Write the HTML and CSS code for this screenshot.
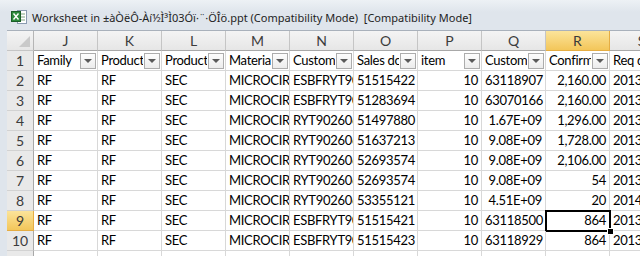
FILE: index.html
```html
<!DOCTYPE html>
<html lang="en">
<head>
    <meta charset="UTF-8">
    <title>Worksheet</title>
    <link rel="stylesheet" href="styles.css">
</head>
<body>
    <div class="window">
        <div class="titlebar">
            <svg class="app-icon" width="17" height="16" viewBox="0 0 17 16">
                <rect x="6.5" y="1.5" width="9" height="13" fill="#fff" stroke="#8a9bb0"/>
                <path d="M9 5h5M9 8h5M9 11h5" stroke="#7fa37f"/>
                <rect x="0.5" y="2.5" width="9" height="10" fill="#2c8a3c" stroke="#1b5e28"/>
                <path d="M2.5 4.5l5 6M7.5 4.5l-5 6" stroke="#fff" stroke-width="1.4"/>
            </svg>
            <span class="title">Worksheet in ±àÒëÔ-Àí½Ì³Ì03Óï·¨·ÖÎö.ppt (Compatibility Mode)&nbsp; [Compatibility Mode]</span>
        </div>

        <div class="sheet">
            <div class="row colheads">
                <div class="corner"></div>
                <div class="colhead">J</div>
                <div class="colhead">K</div>
                <div class="colhead">L</div>
                <div class="colhead">M</div>
                <div class="colhead">N</div>
                <div class="colhead">O</div>
                <div class="colhead">P</div>
                <div class="colhead">Q</div>
                <div class="colhead active">R</div>
                <div class="colhead">S</div>
            </div>

            <div class="row">
                <div class="rowhead">1</div>
                <div class="cell filter"><span>Family</span><i class="dd"></i></div>
                <div class="cell filter"><span>Product</span><i class="dd"></i></div>
                <div class="cell filter"><span>Product</span><i class="dd"></i></div>
                <div class="cell filter"><span>Material</span><i class="dd"></i></div>
                <div class="cell filter"><span>Customer</span><i class="dd"></i></div>
                <div class="cell filter"><span>Sales doc</span><i class="dd"></i></div>
                <div class="cell filter"><span>item</span><i class="dd"></i></div>
                <div class="cell filter"><span>Customer</span><i class="dd"></i></div>
                <div class="cell filter"><span>Confirmed</span><i class="dd"></i></div>
                <div class="cell filter"><span>Req date</span><i class="dd"></i></div>
            </div>

            <div class="row">
                <div class="rowhead">2</div>
                <div class="cell">RF</div>
                <div class="cell">RF</div>
                <div class="cell">SEC</div>
                <div class="cell">MICROCIRCUIT</div>
                <div class="cell">ESBFRYT9010</div>
                <div class="cell num">51515422</div>
                <div class="cell num">10</div>
                <div class="cell num">63118907</div>
                <div class="cell num">2,160.00</div>
                <div class="cell">2013</div>
            </div>

            <div class="row">
                <div class="rowhead">3</div>
                <div class="cell">RF</div>
                <div class="cell">RF</div>
                <div class="cell">SEC</div>
                <div class="cell">MICROCIRCUIT</div>
                <div class="cell">ESBFRYT9010</div>
                <div class="cell num">51283694</div>
                <div class="cell num">10</div>
                <div class="cell num">63070166</div>
                <div class="cell num">2,160.00</div>
                <div class="cell">2013</div>
            </div>

            <div class="row">
                <div class="rowhead">4</div>
                <div class="cell">RF</div>
                <div class="cell">RF</div>
                <div class="cell">SEC</div>
                <div class="cell">MICROCIRCUIT</div>
                <div class="cell">RYT9026060</div>
                <div class="cell num">51497880</div>
                <div class="cell num">10</div>
                <div class="cell num">1.67E+09</div>
                <div class="cell num">1,296.00</div>
                <div class="cell">2013</div>
            </div>

            <div class="row">
                <div class="rowhead">5</div>
                <div class="cell">RF</div>
                <div class="cell">RF</div>
                <div class="cell">SEC</div>
                <div class="cell">MICROCIRCUIT</div>
                <div class="cell">RYT9026060</div>
                <div class="cell num">51637213</div>
                <div class="cell num">10</div>
                <div class="cell num">9.08E+09</div>
                <div class="cell num">1,728.00</div>
                <div class="cell">2013</div>
            </div>

            <div class="row">
                <div class="rowhead">6</div>
                <div class="cell">RF</div>
                <div class="cell">RF</div>
                <div class="cell">SEC</div>
                <div class="cell">MICROCIRCUIT</div>
                <div class="cell">RYT9026060</div>
                <div class="cell num">52693574</div>
                <div class="cell num">10</div>
                <div class="cell num">9.08E+09</div>
                <div class="cell num">2,106.00</div>
                <div class="cell">2013</div>
            </div>

            <div class="row">
                <div class="rowhead">7</div>
                <div class="cell">RF</div>
                <div class="cell">RF</div>
                <div class="cell">SEC</div>
                <div class="cell">MICROCIRCUIT</div>
                <div class="cell">RYT9026060</div>
                <div class="cell num">52693574</div>
                <div class="cell num">10</div>
                <div class="cell num">9.08E+09</div>
                <div class="cell num">54</div>
                <div class="cell">2013</div>
            </div>

            <div class="row">
                <div class="rowhead">8</div>
                <div class="cell">RF</div>
                <div class="cell">RF</div>
                <div class="cell">SEC</div>
                <div class="cell">MICROCIRCUIT</div>
                <div class="cell">RYT9026060</div>
                <div class="cell num">53355121</div>
                <div class="cell num">10</div>
                <div class="cell num">4.51E+09</div>
                <div class="cell num">20</div>
                <div class="cell">2014</div>
            </div>

            <div class="row">
                <div class="rowhead active">9</div>
                <div class="cell">RF</div>
                <div class="cell">RF</div>
                <div class="cell">SEC</div>
                <div class="cell">MICROCIRCUIT</div>
                <div class="cell">ESBFRYT9010</div>
                <div class="cell num">51515421</div>
                <div class="cell num">10</div>
                <div class="cell num">63118500</div>
                <div class="cell num selected">864<b class="handle"></b></div>
                <div class="cell">2013</div>
            </div>

            <div class="row">
                <div class="rowhead">10</div>
                <div class="cell">RF</div>
                <div class="cell">RF</div>
                <div class="cell">SEC</div>
                <div class="cell">MICROCIRCUIT</div>
                <div class="cell">ESBFRYT9010</div>
                <div class="cell num">51515423</div>
                <div class="cell num">10</div>
                <div class="cell num">63118929</div>
                <div class="cell num">864</div>
                <div class="cell">2013</div>
            </div>

            <div class="row">
                <div class="rowhead">11</div>
                <div class="cell"></div>
                <div class="cell"></div>
                <div class="cell"></div>
                <div class="cell"></div>
                <div class="cell"></div>
                <div class="cell"></div>
                <div class="cell"></div>
                <div class="cell"></div>
                <div class="cell"></div>
                <div class="cell"></div>
            </div>
        </div>
    </div>
</body>
</html>
```

FILE: styles.css
```css
* {
    box-sizing: border-box;
    margin: 0;
    padding: 0;
}

body {
    width: 640px;
    height: 256px;
    overflow: hidden;
    background-color: #dfe5ec;
}

.window {
    width: 640px;
    height: 256px;
    overflow: hidden;
}

.titlebar {
    height: 30px;
    display: flex;
    align-items: center;
    gap: 4px;
    padding: 4px 0 0 11px;
    background: linear-gradient(#edf1f5, #dfe5ec 40%);
}

.app-icon {
    flex-shrink: 0;
}

.title {
    font-family: "Noto Sans", sans-serif;
    font-size: 11px;
    color: #1e1e1e;
    white-space: nowrap;
}

.sheet {
    margin-left: 7px;
    border-top: 1px solid #a9b1bb;
    background-color: #fff;
    font-family: Lato, sans-serif;
    font-size: 13px;
    color: #000;
}

.row {
    display: grid;
    grid-template-columns: 27px repeat(10, 64px);
    height: 20px;
}

.corner,
.colhead,
.rowhead {
    background: linear-gradient(#f4f4f4, #e6e6e6);
    border-right: 1px solid #c5c5c5;
    border-bottom: 1px solid #c5c5c5;
    color: #3c3c3c;
    display: flex;
    align-items: center;
    justify-content: center;
    font-size: 14px;
}

.corner {
    position: relative;
    border-right-color: #b5b5b5;
}

.corner::after {
    content: '';
    position: absolute;
    right: 3px;
    bottom: 3px;
    border-left: 11px solid transparent;
    border-bottom: 11px solid #c9c9c9;
}

.rowhead {
    background: #e9e9e9;
    border-right-color: #a8a8a8;
    border-bottom-color: #d2d2d2;
}

.colhead {
    border-bottom-color: #a8a8a8;
}

.colhead.active,
.rowhead.active {
    background: linear-gradient(#fbe49a, #f3c65a);
    border-color: #e5ad43;
    color: #3a3a3a;
}

.cell {
    border-right: 1px solid #d8d8d8;
    border-bottom: 1px solid #d8d8d8;
    padding: 0 3px;
    line-height: 19px;
    letter-spacing: -0.3px;
    white-space: nowrap;
    overflow: hidden;
    position: relative;
}

.cell.num {
    text-align: right;
    overflow: visible;
}

.cell.filter {
    display: flex;
    align-items: center;
    gap: 1px;
    padding-right: 1px;
}

.cell.filter span {
    flex: 1;
    overflow: hidden;
}

.dd {
    flex-shrink: 0;
    width: 16px;
    height: 16px;
    border: 1px solid #acacac;
    background: linear-gradient(#fdfdfd, #ececec);
    display: flex;
    align-items: center;
    justify-content: center;
}

.dd::after {
    content: '';
    border-left: 4px solid transparent;
    border-right: 4px solid transparent;
    border-top: 4px solid #5a5a5a;
}

.cell.selected::before {
    content: '';
    position: absolute;
    left: -1px;
    top: -1px;
    right: -2px;
    bottom: -2px;
    border: 2px solid #000;
}

.handle {
    position: absolute;
    right: -5px;
    bottom: -5px;
    width: 7px;
    height: 7px;
    background-color: #000;
    border: 1px solid #fff;
    z-index: 2;
}
```
